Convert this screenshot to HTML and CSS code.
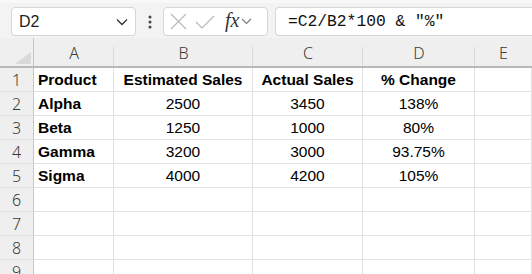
FILE: index.html
```html
<!DOCTYPE html>
<html>
  <head>
    <meta charset="utf-8">
    <title>Sheet1</title>
    <link rel="stylesheet" href="styles.css">
  </head>
  <body>
    <div id="formulaBar">
      <div id="nameBox">
        <span>D2</span>
        <svg class="chevron" width="12" height="8" viewBox="0 0 12 8"><path d="M1 1.5 L6 6.5 L11 1.5" fill="none" stroke="#333" stroke-width="1.3"/></svg>
      </div>
      <div id="moreBtn">
        <svg width="4" height="14" viewBox="0 0 4 14"><circle cx="2" cy="2" r="1.5" fill="#444"/><circle cx="2" cy="7" r="1.5" fill="#444"/><circle cx="2" cy="12" r="1.5" fill="#444"/></svg>
      </div>
      <div id="fxBox">
        <svg width="17" height="17" viewBox="0 0 17 17"><path d="M1 1 L16 16 M16 1 L1 16" stroke="#b8b8b8" stroke-width="1.1"/></svg>
        <svg width="20" height="16" viewBox="0 0 20 16"><path d="M1 8 L7 14 L19 2" fill="none" stroke="#b8b8b8" stroke-width="1.1"/></svg>
        <span class="fx">fx</span>
        <svg class="chevron" width="11" height="7" viewBox="0 0 11 7"><path d="M1 1 L5.5 5.5 L10 1" fill="none" stroke="#777" stroke-width="1.1"/></svg>
      </div>
      <div id="formulaInput">=C2/B2*100 &amp; "%"</div>
    </div>

    <div id="sheet">
      <div class="corner"><div class="triangle"></div></div>
      <div class="colHead">A</div>
      <div class="colHead">B</div>
      <div class="colHead">C</div>
      <div class="colHead">D</div>
      <div class="colHead last">E</div>

      <div class="rowHead">1</div>
      <div class="cell bold">Product</div>
      <div class="cell bold center">Estimated Sales</div>
      <div class="cell bold center">Actual Sales</div>
      <div class="cell bold center">% Change</div>
      <div class="cell"></div>

      <div class="rowHead">2</div>
      <div class="cell bold">Alpha</div>
      <div class="cell center">2500</div>
      <div class="cell center">3450</div>
      <div class="cell center">138%</div>
      <div class="cell"></div>

      <div class="rowHead">3</div>
      <div class="cell bold">Beta</div>
      <div class="cell center">1250</div>
      <div class="cell center">1000</div>
      <div class="cell center">80%</div>
      <div class="cell"></div>

      <div class="rowHead">4</div>
      <div class="cell bold">Gamma</div>
      <div class="cell center">3200</div>
      <div class="cell center">3000</div>
      <div class="cell center">93.75%</div>
      <div class="cell"></div>

      <div class="rowHead">5</div>
      <div class="cell bold">Sigma</div>
      <div class="cell center">4000</div>
      <div class="cell center">4200</div>
      <div class="cell center">105%</div>
      <div class="cell"></div>

      <div class="rowHead">6</div>
      <div class="cell"></div><div class="cell"></div><div class="cell"></div><div class="cell"></div><div class="cell"></div>

      <div class="rowHead">7</div>
      <div class="cell"></div><div class="cell"></div><div class="cell"></div><div class="cell"></div><div class="cell"></div>

      <div class="rowHead">8</div>
      <div class="cell"></div><div class="cell"></div><div class="cell"></div><div class="cell"></div><div class="cell"></div>

      <div class="rowHead">9</div>
      <div class="cell"></div><div class="cell"></div><div class="cell"></div><div class="cell"></div><div class="cell"></div>
    </div>
  </body>
</html>
```

FILE: styles.css
```css
body {
  margin: 0;
  width: 532px;
  height: 274px;
  overflow: hidden;
  background: #ffffff;
  font-family: "Liberation Sans", Arial, sans-serif;
}

#formulaBar {
  height: 38px;
  box-sizing: border-box;
  padding: 4px 0 2px 11px;
  background: #f3f3f3;
  border-top: 3px solid #f8f8f8;
  display: flex;
  align-items: stretch;
}

#nameBox {
  width: 125px;
  box-sizing: border-box;
  background: #fff;
  border: 1px solid #d6d6d6;
  border-radius: 4px;
  display: flex;
  align-items: center;
  justify-content: space-between;
  padding: 0 7px 0 7px;
  font-size: 16px;
  color: #222;
}

#moreBtn {
  width: 27px;
  display: flex;
  align-items: center;
  justify-content: center;
}

#fxBox {
  width: 105px;
  box-sizing: border-box;
  background: #fff;
  border: 1px solid #d6d6d6;
  border-radius: 4px;
  display: flex;
  align-items: center;
  gap: 8px;
  padding-left: 6px;
}

.fx {
  font-family: "Liberation Serif", "DejaVu Serif", serif;
  font-style: italic;
  font-size: 20px;
  color: #333;
  margin-left: 2px;
  margin-top: -3px;
}

#fxBox .chevron {
  margin-left: -6px;
}

#formulaInput {
  flex: 1;
  margin-left: 7px;
  background: #fff;
  border: 1px solid #d6d6d6;
  border-right: none;
  border-radius: 4px 0 0 4px;
  display: flex;
  align-items: center;
  padding-left: 12px;
  font-family: "Liberation Mono", "DejaVu Sans Mono", monospace;
  font-size: 16.3px;
  color: #111;
}

#sheet {
  display: grid;
  grid-template-columns: 34px 80px 139px 110px 112px 57px;
  grid-template-rows: 30px repeat(9, 24px);
}

.corner {
  background: #efefef;
  border-right: 1px solid #c6c6c6;
  border-bottom: 2px solid #b8b8b8;
  position: relative;
}

.triangle {
  position: absolute;
  right: 2px;
  bottom: 2px;
  width: 0;
  height: 0;
  border-left: 16px solid transparent;
  border-bottom: 12px solid #d9d9d9;
}

.colHead {
  background: linear-gradient(#d8d8d8, #d8d8d8) right bottom / 1px 19px no-repeat, #efefef;
  border-bottom: 2px solid #b8b8b8;
  display: flex;
  align-items: center;
  justify-content: center;
  padding-top: 1px;
  font-size: 16px;
  color: #3a3a3a;
  font-family: "Noto Sans", "Liberation Sans", sans-serif;
  font-weight: 300;
}

.colHead.last {
  background: #efefef;
}

.rowHead {
  background: #efefef;
  border-right: 1px solid #c6c6c6;
  border-bottom: 1px solid #e1e1e1;
  display: flex;
  align-items: center;
  justify-content: center;
  font-size: 16px;
  color: #3a3a3a;
  font-family: "Noto Sans", "Liberation Sans", sans-serif;
  font-weight: 300;
}

.cell {
  border-right: 1px solid #e1e1e1;
  border-bottom: 1px solid #e1e1e1;
  display: flex;
  align-items: center;
  padding: 1px 4px 0 4px;
  font-size: 15.5px;
  color: #000;
  white-space: nowrap;
}

.bold {
  font-weight: bold;
}

.center {
  justify-content: center;
}
```
